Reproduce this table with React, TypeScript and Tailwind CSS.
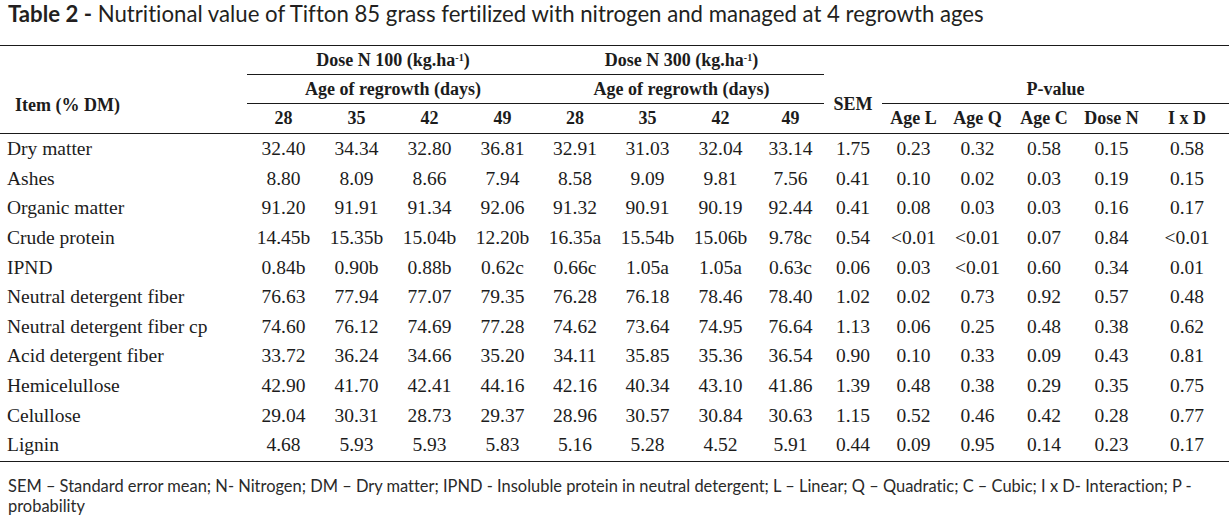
import React from "react";

type Row = {
    item: string;
    dose100: string[];
    dose300: string[];
    sem: string;
    p: string[];
};

const rows: Row[] = [
    { item: "Dry matter", dose100: ["32.40", "34.34", "32.80", "36.81"], dose300: ["32.91", "31.03", "32.04", "33.14"], sem: "1.75", p: ["0.23", "0.32", "0.58", "0.15", "0.58"] },
    { item: "Ashes", dose100: ["8.80", "8.09", "8.66", "7.94"], dose300: ["8.58", "9.09", "9.81", "7.56"], sem: "0.41", p: ["0.10", "0.02", "0.03", "0.19", "0.15"] },
    { item: "Organic matter", dose100: ["91.20", "91.91", "91.34", "92.06"], dose300: ["91.32", "90.91", "90.19", "92.44"], sem: "0.41", p: ["0.08", "0.03", "0.03", "0.16", "0.17"] },
    { item: "Crude protein", dose100: ["14.45b", "15.35b", "15.04b", "12.20b"], dose300: ["16.35a", "15.54b", "15.06b", "9.78c"], sem: "0.54", p: ["<0.01", "<0.01", "0.07", "0.84", "<0.01"] },
    { item: "IPND", dose100: ["0.84b", "0.90b", "0.88b", "0.62c"], dose300: ["0.66c", "1.05a", "1.05a", "0.63c"], sem: "0.06", p: ["0.03", "<0.01", "0.60", "0.34", "0.01"] },
    { item: "Neutral detergent fiber", dose100: ["76.63", "77.94", "77.07", "79.35"], dose300: ["76.28", "76.18", "78.46", "78.40"], sem: "1.02", p: ["0.02", "0.73", "0.92", "0.57", "0.48"] },
    { item: "Neutral detergent fiber cp", dose100: ["74.60", "76.12", "74.69", "77.28"], dose300: ["74.62", "73.64", "74.95", "76.64"], sem: "1.13", p: ["0.06", "0.25", "0.48", "0.38", "0.62"] },
    { item: "Acid detergent fiber", dose100: ["33.72", "36.24", "34.66", "35.20"], dose300: ["34.11", "35.85", "35.36", "36.54"], sem: "0.90", p: ["0.10", "0.33", "0.09", "0.43", "0.81"] },
    { item: "Hemicelullose", dose100: ["42.90", "41.70", "42.41", "44.16"], dose300: ["42.16", "40.34", "43.10", "41.86"], sem: "1.39", p: ["0.48", "0.38", "0.29", "0.35", "0.75"] },
    { item: "Celullose", dose100: ["29.04", "30.31", "28.73", "29.37"], dose300: ["28.96", "30.57", "30.84", "30.63"], sem: "1.15", p: ["0.52", "0.46", "0.42", "0.28", "0.77"] },
    { item: "Lignin", dose100: ["4.68", "5.93", "5.93", "5.83"], dose300: ["5.16", "5.28", "4.52", "5.91"], sem: "0.44", p: ["0.09", "0.95", "0.14", "0.23", "0.17"] },
];

const cols = "grid-cols-[247px_73px_73px_73px_73px_72px_73px_73px_67px_58px_63px_65px_68px_67px_84px]";

const serif = "font-['Liberation_Serif',serif]";
const sans = "font-['Lato','Noto_Sans',sans-serif] [font-variant-ligatures:none]";

function DoseHead({ value }: { value: string }) {
    return (
        <span>
            Dose N {value} (kg.ha<sup className="text-[10px] -top-[5px]">-1</sup>)
        </span>
    );
}

export default function App() {
    return (
        <div className="w-[1229px] h-[524px] bg-white text-[#1c1c1c] overflow-hidden">
            <div className={`${sans} h-[45px] pl-[8px] text-[22.2px] leading-[27px] text-[#231f20]`}>
                <span className="font-bold">Table 2 -</span> Nutritional value of Tifton 85 grass fertilized with nitrogen and managed at 4 regrowth ages
            </div>

            <div className={`${serif} border-t border-b border-[#1a1a1a]`}>
                {/* header */}
                <div className={`grid ${cols} grid-rows-[29px_29px_29px] border-b border-[#1a1a1a] text-[18px] font-bold`}>
                    <div className="col-start-2 col-span-4 row-start-1 flex items-center justify-center border-b border-[#1a1a1a]">
                        <DoseHead value="100" />
                    </div>
                    <div className="col-start-6 col-span-4 row-start-1 flex items-center justify-center border-b border-[#1a1a1a]">
                        <DoseHead value="300" />
                    </div>

                    <div className="col-start-1 row-start-2 row-span-2 flex items-center pl-[15px] pt-[3px]">Item (% DM)</div>
                    <div className="col-start-2 col-span-4 row-start-2 flex items-center justify-center border-b border-[#1a1a1a]">Age of regrowth (days)</div>
                    <div className="col-start-6 col-span-4 row-start-2 flex items-center justify-center border-b border-[#1a1a1a]">Age of regrowth (days)</div>
                    <div className="col-start-10 row-start-2 row-span-2 flex items-center justify-center">SEM</div>
                    <div className="col-start-11 col-span-5 row-start-2 flex items-center justify-center border-b border-[#1a1a1a]">P-value</div>

                    {["28", "35", "42", "49", "28", "35", "42", "49"].map((d, i) => (
                        <div key={i} className="row-start-3 flex items-center justify-center" style={{ gridColumnStart: i + 2 }}>
                            {d}
                        </div>
                    ))}
                    {["Age L", "Age Q", "Age C", "Dose N", "I x D"].map((d, i) => (
                        <div key={d} className="row-start-3 flex items-center justify-center" style={{ gridColumnStart: i + 11 }}>
                            {d}
                        </div>
                    ))}
                </div>

                {/* body */}
                <div className="pb-[1px] text-[19.5px]">
                    {rows.map((r) => (
                        <div key={r.item} className={`grid ${cols} h-[29.6px] items-center`}>
                            <div className="pl-[7px] whitespace-nowrap">{r.item}</div>
                            {[...r.dose100, ...r.dose300, r.sem, ...r.p].map((v, i) => (
                                <div key={i} className="text-center whitespace-nowrap">
                                    {v}
                                </div>
                            ))}
                        </div>
                    ))}
                </div>
            </div>

            <div className={`${sans} pl-[8px] pt-[14px] text-[16.45px] leading-[20px] text-[#2a2a2a] whitespace-nowrap`}>
                SEM – Standard error mean; N- Nitrogen; DM – Dry matter; IPND - Insoluble protein in neutral detergent; L – Linear; Q – Quadratic; C – Cubic; I x D- Interaction; P -
                <br />
                probability
            </div>
        </div>
    );
}
